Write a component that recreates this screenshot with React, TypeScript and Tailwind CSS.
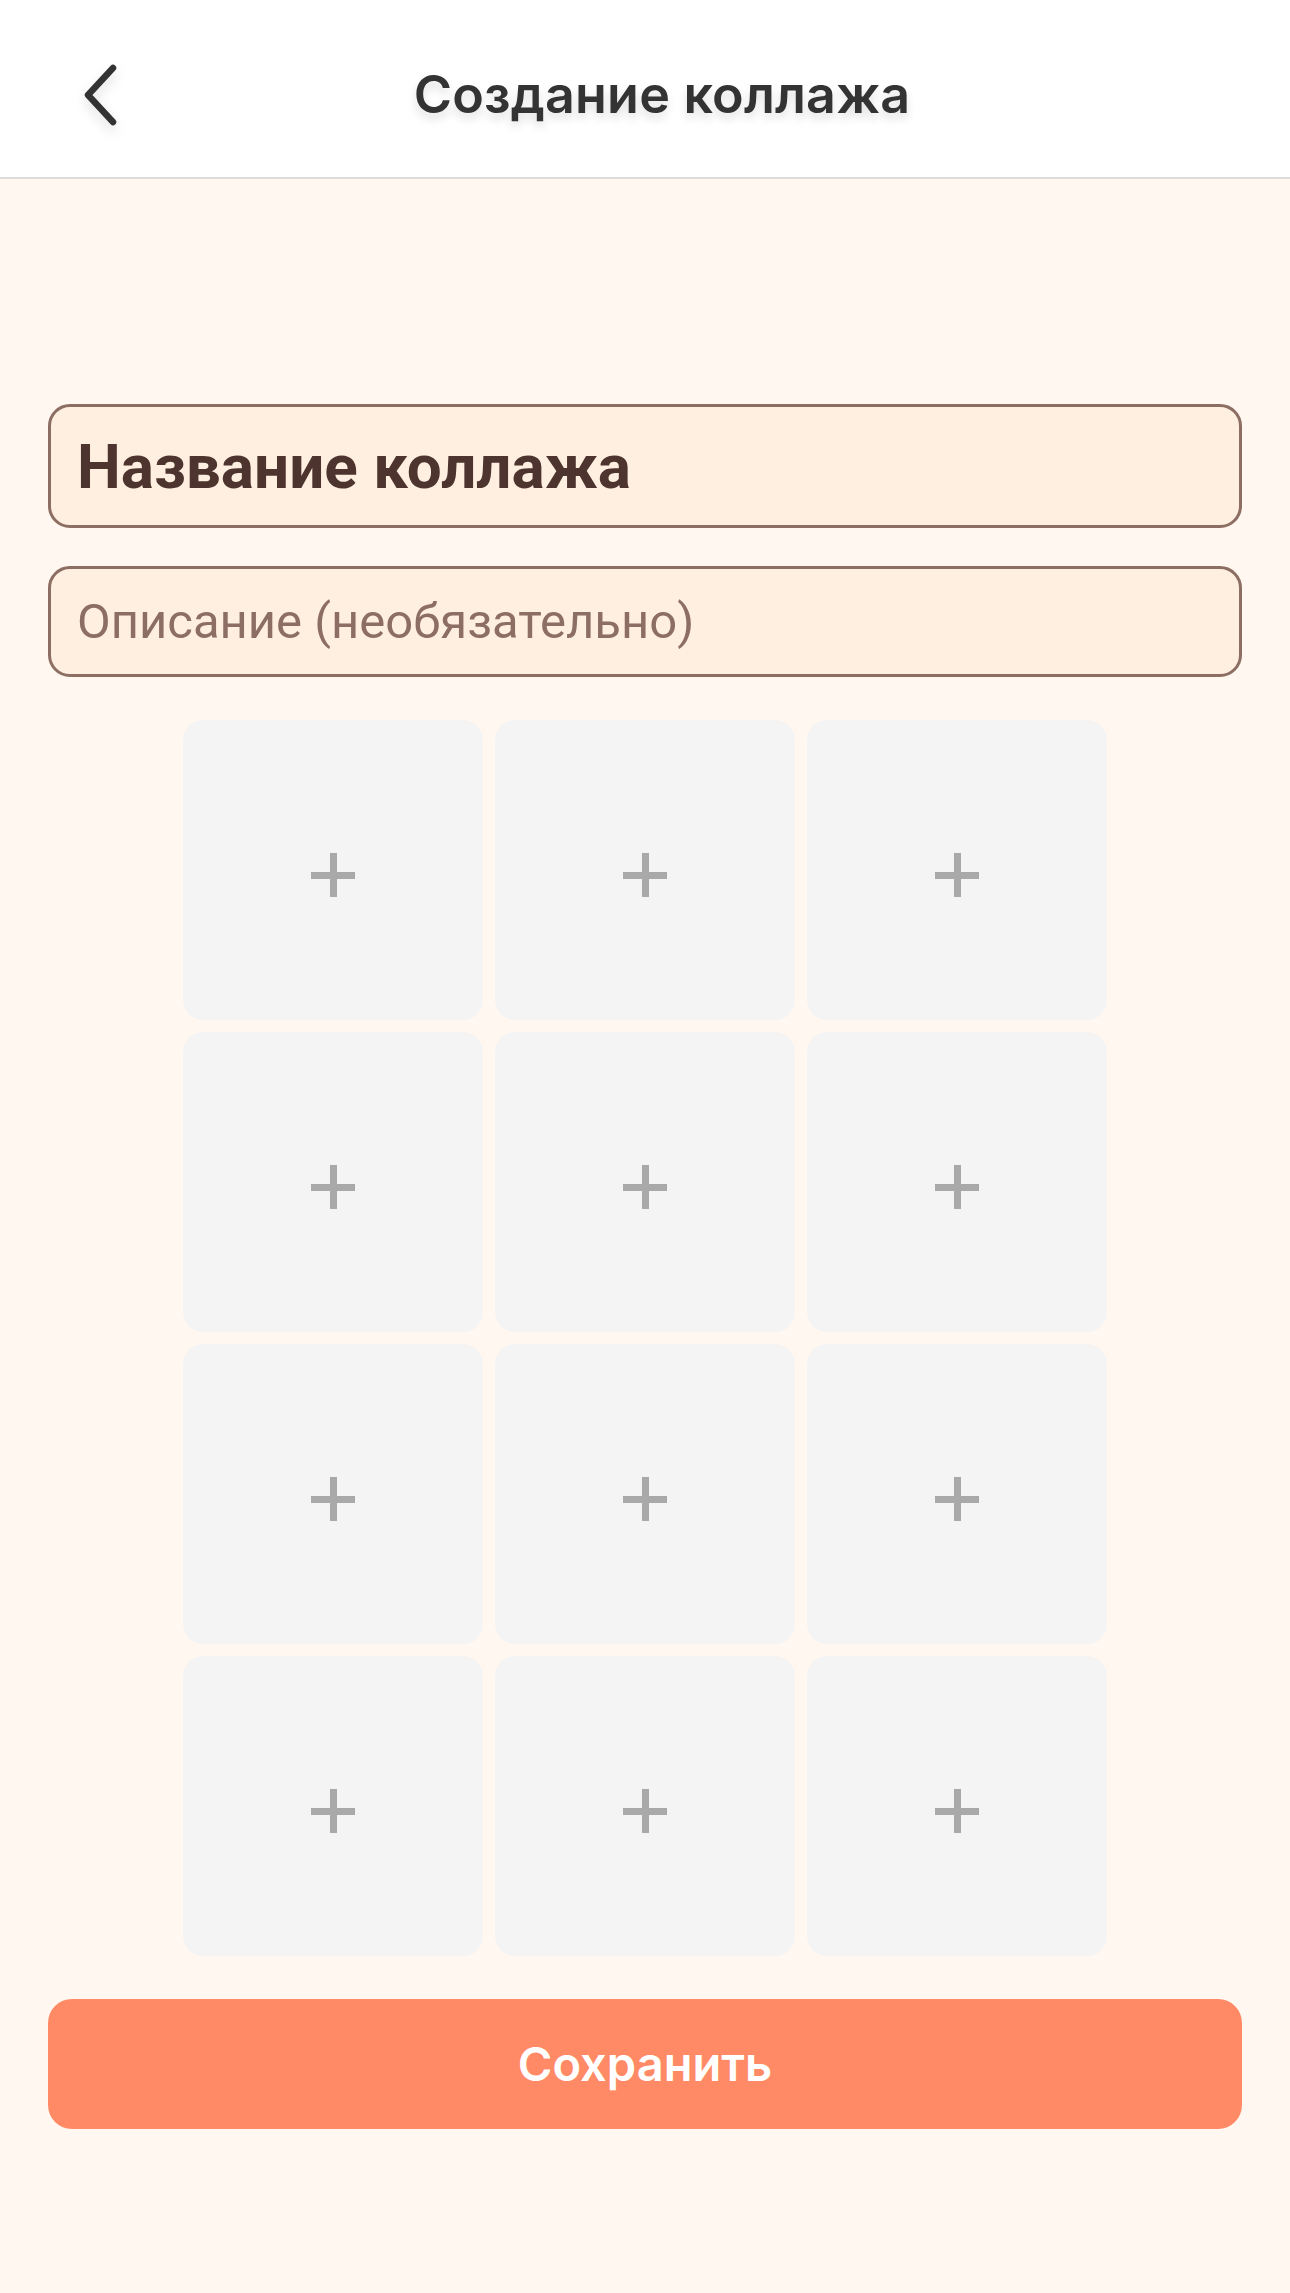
import { useState } from "react"

const SLOTS = Array.from({ length: 12 }, (_, i) => i)

const BackIcon = () => (
    <svg width="40" height="62" viewBox="0 0 40 62" fill="none" stroke="#333333" strokeWidth={6.5} strokeLinecap="round" strokeLinejoin="round">
        <path d="M33 4 L8 31 L33 58" />
    </svg>
)

const PlusIcon = () => (
    <div className="relative w-[44px] h-[44px] mt-[10px]">
        <div className="absolute left-[18.5px] top-0 w-[7px] h-[44px] bg-[#a9a9a9]" />
        <div className="absolute top-[18.5px] left-0 w-[44px] h-[7px] bg-[#a9a9a9]" />
    </div>
)

export default function App() {
    const [title, setTitle] = useState<string>('')
    const [description, setDescription] = useState<string>('')

    return (
        <div className="min-h-[2293px] bg-[#fff7f0] flex flex-col font-['Inter','Noto_Sans',sans-serif]">
            <header className="h-[179px] pt-[12px] bg-white border-b-2 border-[#dcdcdc] grid grid-cols-[1fr_auto_1fr] items-center">
                <button className="justify-self-start ml-[80px] [filter:drop-shadow(0_6px_6px_rgba(0,0,0,0.12))]">
                    <BackIcon />
                </button>
                <h1 className="translate-x-[17px] text-[52px] font-semibold text-[#333333] tracking-[0.2px] [text-shadow:0_6px_10px_rgba(0,0,0,0.12)]">
                    Создание коллажа
                </h1>
                <div />
            </header>

            <main className="px-[48px] pt-[225px] flex flex-col">
                <input
                    value={title}
                    onChange={(e) => setTitle(e.target.value)}
                    placeholder="Название коллажа"
                    className="h-[124px] rounded-[22px] border-[3px] border-[#8d6e63] bg-[#ffefe0] px-[26px] text-[62px] font-bold text-[#4e342e] placeholder:text-[#4e342e] outline-none font-['Roboto',sans-serif]"
                />
                <input
                    value={description}
                    onChange={(e) => setDescription(e.target.value)}
                    placeholder="Описание (необязательно)"
                    className="mt-[38px] h-[111px] rounded-[22px] border-[3px] border-[#8d6e63] bg-[#ffefe0] px-[26px] text-[49px] text-[#4e342e] placeholder:text-[#8d6e63] outline-none font-['Roboto',sans-serif]"
                />

                <div className="mt-[43px] mx-auto grid grid-cols-[repeat(3,300px)] gap-[12px]">
                    {SLOTS.map((slot) => (
                        <button key={slot} className="h-[300px] rounded-[20px] bg-[#f4f4f4] flex items-center justify-center">
                            <PlusIcon />
                        </button>
                    ))}
                </div>

                <button className="mt-[43px] h-[130px] rounded-[24px] bg-[#ff8a65] text-white text-[47px] font-semibold">
                    Сохранить
                </button>
            </main>
        </div>
    )
}
